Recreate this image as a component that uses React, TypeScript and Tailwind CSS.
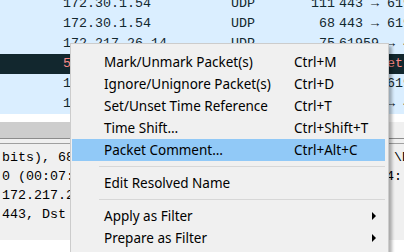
const rows = [
  { src: "172.30.1.54", proto: "UDP", len: "111", info: "443 → 61959 Len=69", bad: false },
  { src: "172.30.1.54", proto: "UDP", len: "68", info: "443 → 61959 Len=26", bad: false },
  { src: "172.217.26.14", proto: "UDP", len: "75", info: "61959 → 443 Len=33", bad: false },
  { src: "52.231.114.183", proto: "TCP", len: "60", info: "[TCP Retransmission] 443", bad: true },
  { src: "172.217.26.14", proto: "UDP", len: "1292", info: "443 → 61959 Len=1250", bad: false },
  { src: "172.30.1.54", proto: "UDP", len: "75", info: "61959 → 443 Len=33", bad: false },
];

const details = [
  "bits), 68 bytes captured (544 bits) on interface \\Device\\NPF_{",
  "0 (00:07:89:6a:2b:c0), Dst: HewlettP_3e:91:0d (a4:",
  "172.217.26.14, Dst: 172.30.1.54",
  "443, Dst Port: 61959, Len: 26",
];

type Item =
  | { kind: "item"; label: string; shortcut?: string; sub?: boolean; active?: boolean }
  | { kind: "sep" };

const menu: Item[] = [
  { kind: "item", label: "Mark/Unmark Packet(s)", shortcut: "Ctrl+M" },
  { kind: "item", label: "Ignore/Unignore Packet(s)", shortcut: "Ctrl+D" },
  { kind: "item", label: "Set/Unset Time Reference", shortcut: "Ctrl+T" },
  { kind: "item", label: "Time Shift…", shortcut: "Ctrl+Shift+T" },
  { kind: "item", label: "Packet Comment…", shortcut: "Ctrl+Alt+C", active: true },
  { kind: "sep" },
  { kind: "item", label: "Edit Resolved Name" },
  { kind: "sep" },
  { kind: "item", label: "Apply as Filter", sub: true },
  { kind: "item", label: "Prepare as Filter", sub: true },
];

export default function App() {
  return (
    <div className="relative h-[252px] w-[404px] overflow-hidden bg-white font-['Liberation_Mono',monospace] text-[13.33px]">
      {/* packet list */}
      <div className="h-[114px] overflow-hidden bg-[#daeeff]">
        <div className="-mt-[6px]">
          {rows.map((r, i) => (
            <div
              key={i}
              className={
                "flex h-[20px] items-center whitespace-nowrap pl-[63px] " +
                (r.bad ? "bg-[#12272e] text-[#f78787]" : "text-[#12272e]")
              }
            >
              <span className="w-[168px] shrink-0">{r.src}</span>
              <span className="w-[60px] shrink-0">{r.proto}</span>
              <span className="w-[44px] shrink-0 text-right">{r.len}</span>
              <span className="shrink-0 pl-[4px]">{r.info}</span>
            </div>
          ))}
        </div>
      </div>
      <div className="h-[8px] bg-white" />
      {/* horizontal scrollbar */}
      <div className="flex h-[16px] bg-[#f0f0f0]">
        <div className="w-[340px] bg-[#cdcdcd]" />
      </div>
      <div className="h-px bg-[#8c8c8c]" />
      <div className="h-[4px] bg-[#f0f0f0]" />
      <div className="h-px bg-[#a0a0a0]" />
      {/* packet details */}
      <div className="h-[96px] overflow-hidden bg-[#f0f0f0] pt-[4px] text-black">
        {details.map((d, i) => (
          <div key={i} className="flex h-[19px] items-center whitespace-nowrap pl-[2px]">
            {d}
          </div>
        ))}
      </div>

      {/* context menu */}
      <div className="absolute left-[70px] top-[43px] h-[220px] w-[319px] border border-[#cccccc] bg-[#f0f0f0] pl-[1px] pr-[3px] pt-[7px] font-['Noto_Sans',sans-serif] text-[13.5px] text-black shadow-[3px_3px_3px_rgba(0,0,0,0.3)]">
        {menu.map((m, i) =>
          m.kind === "sep" ? (
            <div key={i} className="flex h-[11px] items-center pl-[27px]">
              <div className="h-px w-full bg-[#d7d7d7]" />
            </div>
          ) : (
            <div
              key={i}
              className={
                "flex h-[22px] items-center whitespace-nowrap pl-[32px] pr-[9px] " +
                (m.active ? "bg-[#91c9f7]" : "")
              }
            >
              <span className="w-[190px] shrink-0">{m.label}</span>
              <span className="flex-1">{m.shortcut}</span>
              {m.sub && (
                <span className="h-0 w-0 border-y-[4px] border-l-[4px] border-y-transparent border-l-black" />
              )}
            </div>
          )
        )}
      </div>
    </div>
  );
}
